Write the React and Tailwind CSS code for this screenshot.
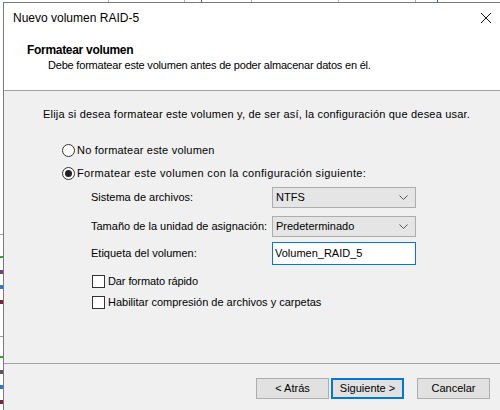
import React from 'react';

const Radio = ({ checked }) => (
  <span className="w-[13px] h-[13px] rounded-full border border-[#333333] bg-white flex items-center justify-center shrink-0">
    {checked && <span className="w-[7px] h-[7px] rounded-full bg-[#222222]" />}
  </span>
);

const Checkbox = () => (
  <span className="w-[13px] h-[13px] border border-[#333333] bg-white shrink-0" />
);

const Chevron = () => (
  <svg width="9" height="6" viewBox="0 0 9 6" className="shrink-0">
    <path d="M0.5 0.5 L4.5 4.5 L8.5 0.5" fill="none" stroke="#555" strokeWidth="1" />
  </svg>
);

const Select = ({ value }) => (
  <div className="w-[144px] h-[21px] shrink-0 bg-[#e5e5e5] border border-[#adadad] flex items-center pl-[3px] pr-[7px]">
    <span className="flex-1">{value}</span>
    <Chevron />
  </div>
);

const WinButton = ({ children, primary }) => (
  <button
    className={
      'w-[73px] h-[21px] bg-[#e1e1e1] flex items-center justify-center ' +
      (primary ? 'border-2 border-[#0078d7]' : 'border border-[#adadad]')
    }
  >
    {children}
  </button>
);

export default function App() {
  return (
    <div className="w-[500px] h-[410px] bg-white relative overflow-hidden text-[11px] leading-none whitespace-nowrap text-black font-['Liberation_Sans',Arial,sans-serif]">
      {/* background app fragments */}
      <div className="absolute left-[108px] top-0 w-px h-[2px] bg-[#b0b0b0]" />
      <div className="absolute left-[184px] top-0 w-px h-[2px] bg-[#b0b0b0]" />
      <div className="absolute left-[201px] top-0 w-px h-[2px] bg-[#0078d7]" />
      <div className="absolute left-[251px] top-0 w-px h-[2px] bg-[#b0b0b0]" />
      <div className="absolute left-[338px] top-0 w-px h-[2px] bg-[#b0b0b0]" />
      <div className="absolute left-[415px] top-0 w-px h-[2px] bg-[#b0b0b0]" />
      <div className="absolute left-[437px] top-0 w-px h-[2px] bg-[#0078d7]" />
      <div className="absolute left-0 top-[234px] w-[3px] h-px bg-[#a0a0a0]" />
      <div className="absolute left-0 top-[256px] w-[3px] h-[2px] bg-[#2fa82f]" />
      <div className="absolute left-0 top-[270px] w-[3px] h-[4px] bg-[#6a4a7a]" />
      <div className="absolute left-0 top-[285px] w-[3px] h-[4px] bg-[#2a7ad0]" />
      <div className="absolute left-0 top-[300px] w-[3px] h-[4px] bg-[#802040]" />
      <div className="absolute left-0 top-[336px] w-[3px] h-px bg-[#a0a0a0]" />
      <div className="absolute left-0 top-[356px] w-[3px] h-[2px] bg-[#2fa82f]" />
      <div className="absolute left-0 top-[370px] w-[3px] h-[4px] bg-[#6a4a7a]" />
      <div className="absolute left-0 top-[385px] w-[3px] h-[4px] bg-[#2a7ad0]" />
      <div className="absolute left-0 top-[400px] w-[3px] h-[4px] bg-[#802040]" />

      <div className="ml-[3px] mt-[2px] h-[408px] border-l border-t border-[#7a7a7a] flex flex-col">
        {/* header */}
        <div className="h-[88px] bg-white border-b border-[#a0a0a0]">
          <div className="h-[29px] flex items-center pl-[9px] pr-[8px] text-[12px]">
            <span className="flex-1">Nuevo volumen RAID-5</span>
            <svg width="12" height="12" viewBox="0 0 12 12">
              <path d="M1 1 L11 11 M11 1 L1 11" stroke="#111" strokeWidth="1" />
            </svg>
          </div>
          <div className="h-[16px] flex items-center pl-[23px] mt-[10px] font-bold text-[12px] tracking-[-0.3px]">Formatear volumen</div>
          <div className="h-[15px] flex items-center pl-[44px] tracking-[-0.2px]">
            Debe formatear este volumen antes de poder almacenar datos en él.
          </div>
        </div>

        {/* body */}
        <div className="h-[273px] bg-[#f0f0f0] border-b border-[#a0a0a0]">
          <div className="h-[20px] mt-[13px] flex items-center pl-[39px] tracking-[0.2px]">
            Elija si desea formatear este volumen y, de ser así, la configuración que desea usar.
          </div>
          <div className="h-[20px] mt-[16px] flex items-center pl-[58px] gap-[2px] tracking-[0.2px]">
            <Radio />
            <span>No formatear este volumen</span>
          </div>
          <div className="h-[20px] mt-[3px] flex items-center pl-[58px] gap-[2px] tracking-[0.35px]">
            <Radio checked />
            <span>Formatear este volumen con la configuración siguiente:</span>
          </div>
          <div className="h-[21px] mt-[4px] flex items-center pl-[87px]">
            <span className="w-[181px] shrink-0">Sistema de archivos:</span>
            <Select value="NTFS" />
          </div>
          <div className="h-[21px] mt-[8px] flex items-center pl-[87px]">
            <span className="w-[181px] shrink-0">Tamaño de la unidad de asignación:</span>
            <Select value="Predeterminado" />
          </div>
          <div className="h-[23px] mt-[5px] flex items-center pl-[87px]">
            <span className="w-[181px] shrink-0">Etiqueta del volumen:</span>
            <div className="w-[144px] h-[23px] shrink-0 bg-white border border-[#0078d7] flex items-center pl-[2px]">
              Volumen_RAID_5
            </div>
          </div>
          <div className="h-[20px] mt-[6px] flex items-center pl-[88px] gap-[3px] tracking-[-0.1px]">
            <Checkbox />
            <span>Dar formato rápido</span>
          </div>
          <div className="h-[20px] mt-px flex items-center pl-[88px] gap-[3px]">
            <Checkbox />
            <span>Habilitar compresión de archivos y carpetas</span>
          </div>
        </div>

        {/* footer */}
        <div className="flex-1 bg-[#f0f0f0] flex items-start justify-end pr-[10px] pt-[14px]">
          <div className="flex gap-[2px]">
            <WinButton>&lt; Atrás</WinButton>
            <WinButton primary>Siguiente &gt;</WinButton>
          </div>
          <div className="ml-[13px]">
            <WinButton>Cancelar</WinButton>
          </div>
        </div>
      </div>
    </div>
  );
}
